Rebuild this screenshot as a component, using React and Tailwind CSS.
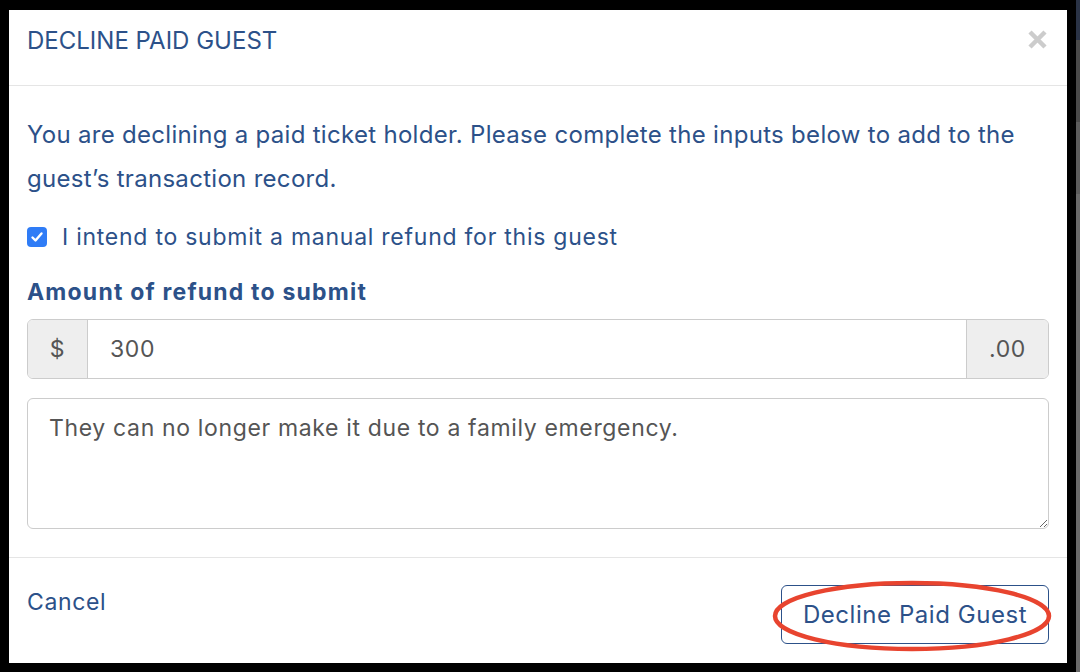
import React from 'react';

const BLUE = 'text-[#2c5189]';

const App = () => {
  return (
    <div className="w-[1080px] h-[672px] bg-black flex font-['Inter',sans-serif] overflow-hidden">
      <div className="relative ml-[9px] mt-[10px] w-[1058px] h-[653px] bg-white flex flex-col">
        {/* Header */}
        <div className="h-[76px] border-b border-[#e5e5e5] px-[18px] flex items-start justify-between">
          <h2 className={`mt-[16px] text-[24px] leading-[30px] font-normal ${BLUE}`}>DECLINE PAID GUEST</h2>
          <button className="mt-[19px] mr-[1px]">
            <svg width="21" height="21" viewBox="0 0 21 21">
              <path d="M3 3 L18 18 M18 3 L3 18" stroke="#cccccc" strokeWidth="4.5" />
            </svg>
          </button>
        </div>

        {/* Body */}
        <div className="px-[18px] pt-[27px] pb-[28px] border-b border-[#e5e5e5] flex flex-col">
          <p className={`text-[24px] leading-[44px] tracking-[0.3px] ${BLUE}`}>
            You are declining a paid ticket holder. Please complete the inputs below to add to the guest’s transaction record.
          </p>

          <label className={`mt-[21px] h-[30px] flex items-center text-[23px] tracking-[0.75px] ${BLUE}`}>
            <span className="w-[20px] h-[20px] rounded-[4px] bg-[#2f7cf6] flex items-center justify-center">
              <svg width="14" height="14" viewBox="0 0 14 14">
                <path d="M2.5 7.5 L5.5 10.5 L11.5 3.5" fill="none" stroke="white" strokeWidth="2.4" strokeLinecap="round" strokeLinejoin="round" />
              </svg>
            </span>
            <span className="ml-[15px]">I intend to submit a manual refund for this guest</span>
          </label>

          <div className={`mt-[25px] text-[23px] leading-[30px] font-bold tracking-[1.2px] ${BLUE}`}>Amount of refund to submit</div>

          <div className="mt-[12px] h-[60px] flex border border-[#cccccc] rounded-[6px] overflow-hidden text-[23px] tracking-[0.6px] text-[#555555]">
            <div className="w-[60px] bg-[#eeeeee] border-r border-[#cccccc] flex items-center justify-center">$</div>
            <input
              readOnly
              value="300"
              className="flex-1 min-w-0 px-[22px] outline-none text-[#555555] bg-white tracking-[0.6px]"
            />
            <div className="w-[82px] bg-[#eeeeee] border-l border-[#cccccc] flex items-center justify-center">.00</div>
          </div>

          <textarea
            readOnly
            defaultValue="They can no longer make it due to a family emergency."
            className="mt-[19px] h-[131px] border border-[#cccccc] rounded-[6px] px-[21px] py-[13px] text-[23px] leading-[32px] tracking-[0.65px] text-[#555555] outline-none"
          />
        </div>

        {/* Footer */}
        <div className="flex-1 px-[18px] flex items-start justify-between">
          <button className={`mt-[29px] text-[23px] leading-[30px] tracking-[0.65px] ${BLUE}`}>Cancel</button>
          <button className={`mt-[27px] w-[268px] h-[59px] border border-[#2c5189] rounded-[6px] text-[24px] tracking-[0.55px] ${BLUE}`}>
            Decline Paid Guest
          </button>
        </div>

        {/* annotation */}
        <svg className="absolute left-[751px] top-[556px] pointer-events-none" width="300" height="100" viewBox="0 0 300 100">
          <ellipse cx="152" cy="50" rx="137" ry="33" fill="none" stroke="#e8442f" strokeWidth="4.5" />
        </svg>
      </div>
      <div className="ml-[9px] w-[4px] flex flex-col">
        <div className="h-[40px] bg-[#2a3346]" />
        <div className="h-[82px] bg-[#4a4a4a]" />
        <div className="h-[72px] bg-[#5c5c5c]" />
        <div className="flex-1 bg-[#6a6a6a]" />
      </div>
    </div>
  );
};

export default App;
